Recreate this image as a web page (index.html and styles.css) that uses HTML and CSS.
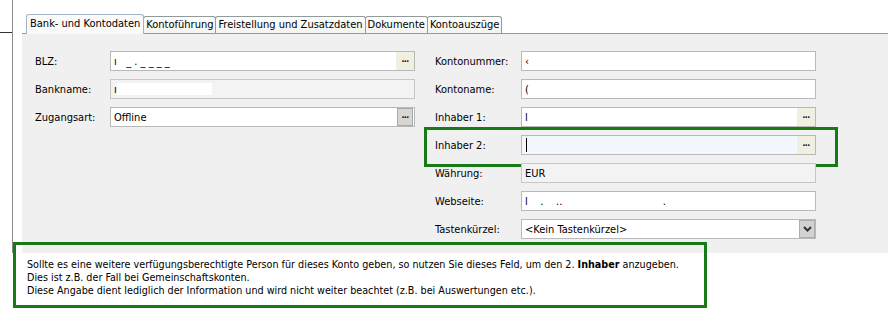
FILE: index.html
```html
<!DOCTYPE html>
<html lang="de">
<head>
<meta charset="utf-8">
<title>Konto</title>
<link rel="stylesheet" href="styles.css">
</head>
<body>
<div class="app">
  <div class="gutter"><div class="gutter-mark"></div></div>
  <div class="main">
    <div class="tabs">
      <div class="tab active">Bank- und Kontodaten</div>
      <div class="tab">Kontoführung</div>
      <div class="tab">Freistellung und Zusatzdaten</div>
      <div class="tab">Dokumente</div>
      <div class="tab">Kontoauszüge</div>
    </div>
    <div class="panel">
      <div class="col col-left">
        <div class="row"><span class="label">BLZ:</span><div class="field"><span class="val">ı&nbsp;&nbsp;&nbsp;_ . _ _ _ _</span><span class="btn dots">•••</span></div></div>
        <div class="row"><span class="label">Bankname:</span><div class="field disabled"><span class="val">ı</span><span class="redact"></span></div></div>
        <div class="row"><span class="label">Zugangsart:</span><div class="field"><span class="val">Offline</span><span class="btn dots gray">•••</span></div></div>
      </div>
      <div class="col col-right">
        <div class="row"><span class="label">Kontonummer:</span><div class="field"><span class="val">‹</span></div></div>
        <div class="row"><span class="label">Kontoname:</span><div class="field"><span class="val">(</span></div></div>
        <div class="row"><span class="label">Inhaber 1:</span><div class="field"><span class="val">l</span><span class="btn dots">•••</span></div></div>
        <div class="row highlight"><span class="label">Inhaber 2:</span><div class="field focus"><span class="caret"></span><span class="btn dots">•••</span></div></div>
        <div class="row"><span class="label">Währung:</span><div class="field disabled"><span class="val">EUR</span></div></div>
        <div class="row"><span class="label">Webseite:</span><div class="field"><span class="val">l&nbsp;&nbsp;&nbsp;&nbsp;.&nbsp;&nbsp;&nbsp;&nbsp;..&nbsp;&nbsp;&nbsp;&nbsp;&nbsp;&nbsp;&nbsp;&nbsp;&nbsp;&nbsp;&nbsp;&nbsp;&nbsp;&nbsp;&nbsp;&nbsp;&nbsp;&nbsp;&nbsp;&nbsp;&nbsp;&nbsp;&nbsp;&nbsp;&nbsp;&nbsp;&nbsp;&nbsp;&nbsp;&nbsp;&nbsp;&nbsp;.</span></div></div>
        <div class="row"><span class="label">Tastenkürzel:</span><div class="field"><span class="val">&lt;Kein Tastenkürzel&gt;</span><span class="btn drop"><svg width="9" height="6" viewBox="0 0 9 6"><path d="M1 1 L4.5 4.5 L8 1" fill="none" stroke="#333" stroke-width="2"/></svg></span></div></div>
      </div>
    </div>
  </div>
</div>
<div class="note">
  <p>Sollte es eine weitere verfügungsberechtigte Person für dieses Konto geben, so nutzen Sie dieses Feld, um den 2. <b>Inhaber</b> anzugeben.</p>
  <p>Dies ist z.B. der Fall bei Gemeinschaftskonten.</p>
  <p>Diese Angabe dient lediglich der Information und wird nicht weiter beachtet (z.B. bei Auswertungen etc.).</p>
</div>
</body>
</html>
```
FILE: styles.css
```css
* { box-sizing: border-box; }
html, body { margin: 0; padding: 0; background: #fff; }
body {
  font-family: "DejaVu Sans Condensed", "DejaVu Sans", sans-serif;
  font-stretch: condensed;
  font-size: 11px;
  color: #000;
  width: 888px;
  height: 329px;
  overflow: hidden;
}
.app { display: flex; height: 253px; }
.gutter { width: 12px; flex: none; }
.gutter-mark { height: 33px; border-bottom: 1px solid #333; }
.main {
  flex: 1;
  border-left: 1px solid #8a8a8a;
  padding: 14px 0 0 9px;
  display: flex;
  flex-direction: column;
}
.tabs { display: flex; align-items: flex-end; height: 19px; margin-left: 4px; }
.tab {
  height: 17px;
  padding: 0 2px;
  border: 1px solid #919b9c;
  border-bottom: none;
  border-radius: 3px 3px 0 0;
  background: linear-gradient(#ffffff, #f3f3ef);
  line-height: 16px;
  white-space: nowrap;
}
.tab + .tab { margin-left: -1px; }
.tab.active {
  height: 20px;
  margin-bottom: -1px;
  padding: 0 3px;
  position: relative;
  background: #fafafa;
  border-color: #a3b3c7;
  line-height: 18px;
}
.panel {
  flex: 1;
  background: #f0f0f0;
  border-top: 1px solid #919b9c;
  display: flex;
  gap: 20px;
  padding: 17px 0 0 13px;
}
.col { display: flex; flex-direction: column; gap: 8px; }
.row { display: flex; align-items: center; height: 20px; }
.col-left .label { width: 75px; }
.col-left .field { width: 305px; }
.col-right .label { width: 86px; }
.col-right .field { width: 295px; }
.field {
  height: 20px;
  border: 1px solid #b9b9b9;
  background: #fff;
  display: flex;
  align-items: center;
  padding-left: 3px;
  position: relative;
}
.field.disabled { background: #f3f3f3; border-color: #c6c6c6; }
.field.focus { background: #f3f8fe; }
.val { flex: 1; white-space: nowrap; overflow: hidden; }
.redact { position: absolute; left: 6px; top: 3px; width: 95px; height: 12px; background: #fff; }
.caret { width: 1px; height: 14px; background: #000; margin-left: 1px; flex: none; }
.btn {
  margin-left: auto;
  width: 18px;
  height: 18px;
  flex: none;
  display: flex;
  align-items: center;
  justify-content: center;
}
.dots { background: #f0efe2; font-size: 5px; letter-spacing: -0.5px; font-weight: bold; }
.dots.gray { background: #d6d6d6; border: 1px solid #a9a9a9; width: 16px; height: 18px; margin-right: 1px; }
.drop { background: #d2d2d2; border: 1px solid #adadad; width: 16px; height: 18px; }
.highlight { position: relative; }
.highlight::after {
  content: "";
  position: absolute;
  left: -11px; right: -22px; top: -8px; bottom: -12px;
  border: 3px solid #177a17;
  pointer-events: none;
}
.note {
  position: relative;
  margin-left: 13px;
  width: 694px;
  height: 55px;
  padding: 5px 0 0 14px;
  font-size: 10.7px;
}
.note::before {
  content: "";
  position: absolute;
  left: 0; right: 0; top: -11px; bottom: 0;
  border: 3px solid #177a17;
}
.note p { margin: 0; line-height: 13px; white-space: nowrap; }
```
